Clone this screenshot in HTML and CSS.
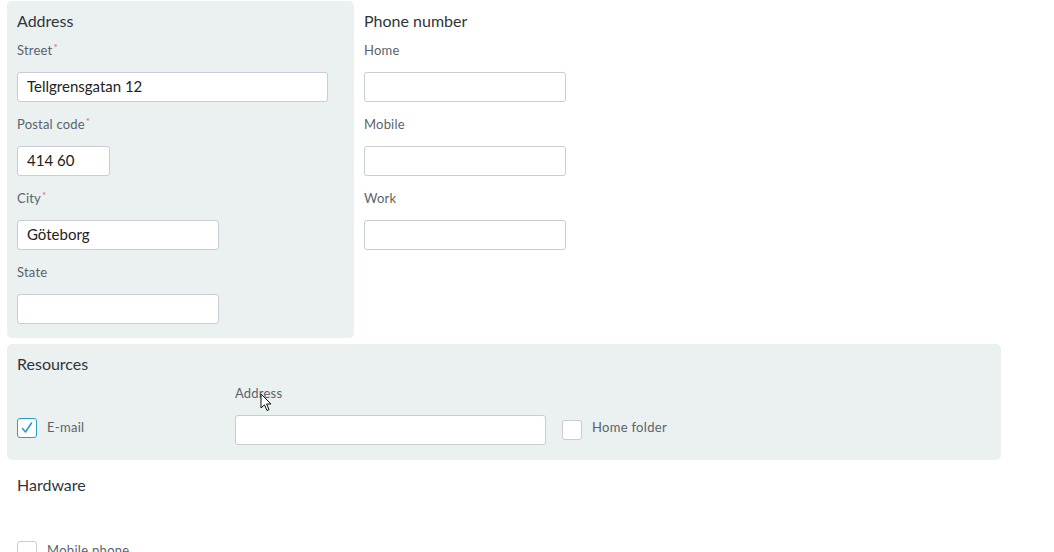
FILE: index.html
```html
<!DOCTYPE html>
<html lang="en">
<head>
    <meta charset="UTF-8">
    <title>Contact details</title>
    <link rel="stylesheet" href="styles.css">
</head>
<body>
    <div class="form">
        <div class="top-row">
            <div class="panel address-panel">
                <h3 class="group-title">Address</h3>
                <div class="field">
                    <label class="field-label">Street<span class="req">*</span></label>
                    <input type="text" class="text-input wide" value="Tellgrensgatan 12">
                </div>
                <div class="field">
                    <label class="field-label">Postal code<span class="req">*</span></label>
                    <input type="text" class="text-input short" value="414 60">
                </div>
                <div class="field">
                    <label class="field-label">City<span class="req">*</span></label>
                    <input type="text" class="text-input medium" value="Göteborg">
                </div>
                <div class="field">
                    <label class="field-label">State</label>
                    <input type="text" class="text-input medium">
                </div>
            </div>

            <div class="panel phone-panel">
                <h3 class="group-title">Phone number</h3>
                <div class="field">
                    <label class="field-label">Home</label>
                    <input type="text" class="text-input medium">
                </div>
                <div class="field">
                    <label class="field-label">Mobile</label>
                    <input type="text" class="text-input medium">
                </div>
                <div class="field">
                    <label class="field-label">Work</label>
                    <input type="text" class="text-input medium">
                </div>
            </div>
        </div>

        <div class="panel resources-panel">
            <h3 class="group-title">Resources</h3>
            <div class="option-row">
                <div class="check-item email-item">
                    <span class="check-box checked">
                        <svg width="14" height="14" viewBox="0 0 14 14"><path d="M2.5 7.5 L5.5 11 L11.5 2" fill="none" stroke="#2a9fc9" stroke-width="1.6" stroke-linecap="round" stroke-linejoin="round"/></svg>
                    </span>
                    <span class="check-label">E-mail</span>
                </div>
                <div class="field inline-field">
                    <label class="field-label">Address</label>
                    <input type="text" class="text-input wide">
                </div>
                <div class="check-item">
                    <span class="check-box"></span>
                    <span class="check-label raised">Home folder</span>
                </div>
            </div>
            <svg class="cursor" width="14" height="20" viewBox="0 0 14 20"><path d="M1 1 L1 15 L4.5 11.8 L7 17.5 L9 16.6 L6.6 11 L11 11 Z" fill="#fff" stroke="#111" stroke-width="1" stroke-linejoin="round"/></svg>
        </div>

        <div class="panel plain hardware-panel">
            <h3 class="group-title">Hardware</h3>
            <div class="option-row hardware-row">
                <div class="check-item">
                    <span class="check-box"></span>
                    <span class="check-label">Mobile phone</span>
                </div>
            </div>
        </div>
    </div>
</body>
</html>
```

FILE: styles.css
```css
body {
    margin: 0;
    padding: 0;
    font-family: Lato, "Open Sans", sans-serif;
    background: #fff;
    color: #333;
    overflow: hidden;
}

.form {
    padding: 1px 7px 0;
    display: flex;
    flex-direction: column;
    gap: 6px;
}

.top-row {
    display: flex;
    align-items: flex-start;
}

.panel {
    background: #ebf0f0;
    border-radius: 5px;
    padding: 10px 10px 14px;
    box-sizing: border-box;
    position: relative;
}

.panel.plain {
    background: none;
}

.address-panel {
    width: 347px;
}

.phone-panel {
    background: none;
    flex: 1;
}

.resources-panel {
    width: 994px;
    padding-bottom: 15px;
}

.hardware-panel {
    margin-top: -1px;
}

.group-title {
    margin: 0 0 9px;
    font-size: 16px;
    font-weight: 400;
    line-height: 20px;
    color: #2f353b;
}

.field {
    display: flex;
    flex-direction: column;
    align-items: flex-start;
}

.field + .field {
    margin-top: 12px;
}

.field-label {
    font-size: 13px;
    line-height: 20px;
    color: #5a636c;
    margin-bottom: 12px;
    letter-spacing: 0.2px;
}

.req {
    color: #e06b6b;
    font-size: 10px;
    vertical-align: top;
    line-height: 14px;
    margin-left: 1px;
}

.text-input {
    height: 30px;
    box-sizing: border-box;
    border: 1px solid #c9ccd4;
    border-radius: 3px;
    background: #fff;
    padding: 0 9px 2px;
    font-family: Lato, "Open Sans", sans-serif;
    font-size: 15px;
    color: #222;
    outline: none;
}

.text-input.wide {
    width: 311px;
}

.text-input.medium {
    width: 202px;
}

.text-input.short {
    width: 93px;
}

.option-row {
    display: flex;
    align-items: flex-end;
}

.check-item {
    display: flex;
    align-items: center;
    height: 30px;
}

.email-item {
    width: 218px;
    position: relative;
    top: -2px;
}

.inline-field {
    margin-right: 16px;
}

.check-box {
    width: 20px;
    height: 20px;
    box-sizing: border-box;
    border: 1px solid #c9ccd4;
    border-radius: 3px;
    background: #fff;
    margin-right: 10px;
    display: flex;
    align-items: center;
    justify-content: center;
}

.check-box.checked {
    border-color: #2a9fc9;
}

.check-label {
    font-size: 13px;
    color: #5a636c;
    letter-spacing: 0.3px;
    position: relative;
    top: -1px;
}

.check-label.raised {
    top: -3px;
}

.hardware-row {
    margin-top: 41px;
    height: 30px;
}

.cursor {
    position: absolute;
    left: 253px;
    top: 49px;
}
```
